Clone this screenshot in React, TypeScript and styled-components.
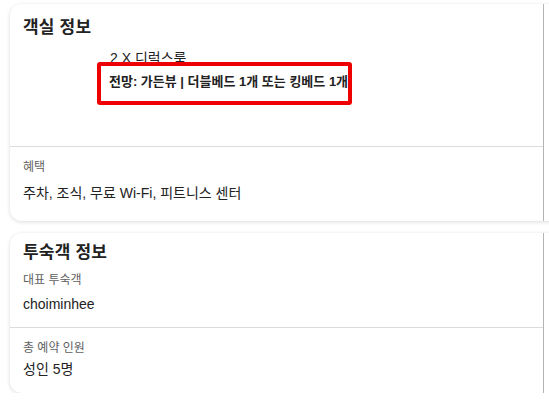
import React from "react";
import styled, { createGlobalStyle } from "styled-components";

const Global = createGlobalStyle`
  html, body { margin: 0; padding: 0; background: #ffffff; overflow: hidden; }
  body { font-family: "Liberation Sans", "Noto Sans CJK KR", sans-serif; color: #222; }
`;

const Page = styled.div`
  display: flex;
  flex-direction: column;
  gap: 12px;
  padding: 4px 0 0 10px;
  width: 560px;
`;

const Card = styled.div`
  background: #fff;
  border-radius: 12px;
  box-shadow: 0 1px 4px rgba(0, 0, 0, 0.14);
  display: flex;
  width: 560px;
`;

const Main = styled.div`
  width: 533px;
  border-right: 1px solid #b4b4b4;
  display: flex;
  flex-direction: column;
`;

const Section = styled.div<{ $pt: number; $pb: number; $divider?: boolean; $h?: number }>`
  position: relative;
  padding: ${(p) => p.$pt}px 13px ${(p) => p.$pb}px;
  border-bottom: ${(p) => (p.$divider ? "1px solid #dcdcdc" : "none")};
  ${(p) => (p.$h ? `height: ${p.$h}px; box-sizing: border-box;` : "")}
  display: flex;
  flex-direction: column;
`;

const Title = styled.h2`
  margin: 0;
  font-size: 17px;
  line-height: 20px;
  font-weight: 700;
  color: #222;
  letter-spacing: 0.2px;
`;

const Room = styled.div`
  margin: 10px 0 0 86px;
  display: flex;
  flex-direction: column;
  gap: 6px;
`;

const RoomName = styled.div`
  font-size: 14px;
  line-height: 20px;
  color: #222;
  padding-left: 1px;
`;

const RoomDetail = styled.div`
  font-size: 13px;
  line-height: 16px;
  font-weight: 700;
  color: #222;
`;

const Highlight = styled.div`
  position: absolute;
  left: 87px;
  top: 58px;
  width: 255px;
  height: 43px;
  box-sizing: border-box;
  border: 4px solid #ee0000;
  border-radius: 3px;
  pointer-events: none;
`;

const Label = styled.div<{ $mt?: number }>`
  margin-top: ${(p) => p.$mt ?? 0}px;
  font-size: 12px;
  line-height: 16px;
  color: #5f5f5f;
`;

const Value = styled.div<{ $mt?: number }>`
  margin-top: ${(p) => p.$mt ?? 0}px;
  font-size: 14px;
  line-height: 20px;
  color: #222;
`;

export default function App() {
  return (
    <>
      <Global />
      <Page>
        <Card>
          <Main>
            <Section $pt={14} $pb={0} $divider $h={143}>
              <Title>객실 정보</Title>
              <Room>
                <RoomName>2 X 디럭스룸</RoomName>
                <RoomDetail>전망: 가든뷰 | 더블베드 1개 또는 킹베드 1개</RoomDetail>
              </Room>
              <Highlight />
            </Section>
            <Section $pt={12} $pb={18}>
              <Label>혜택</Label>
              <Value $mt={8}>주차, 조식, 무료 Wi-Fi, 피트니스 센터</Value>
            </Section>
          </Main>
        </Card>
        <Card>
          <Main>
            <Section $pt={10} $pb={13} $divider>
              <Title>투숙객 정보</Title>
              <Label $mt={9}>대표 투숙객</Label>
              <Value $mt={6}>choiminhee</Value>
            </Section>
            <Section $pt={12} $pb={14}>
              <Label>총 예약 인원</Label>
              <Value $mt={3}>성인 5명</Value>
            </Section>
          </Main>
        </Card>
      </Page>
    </>
  );
}
